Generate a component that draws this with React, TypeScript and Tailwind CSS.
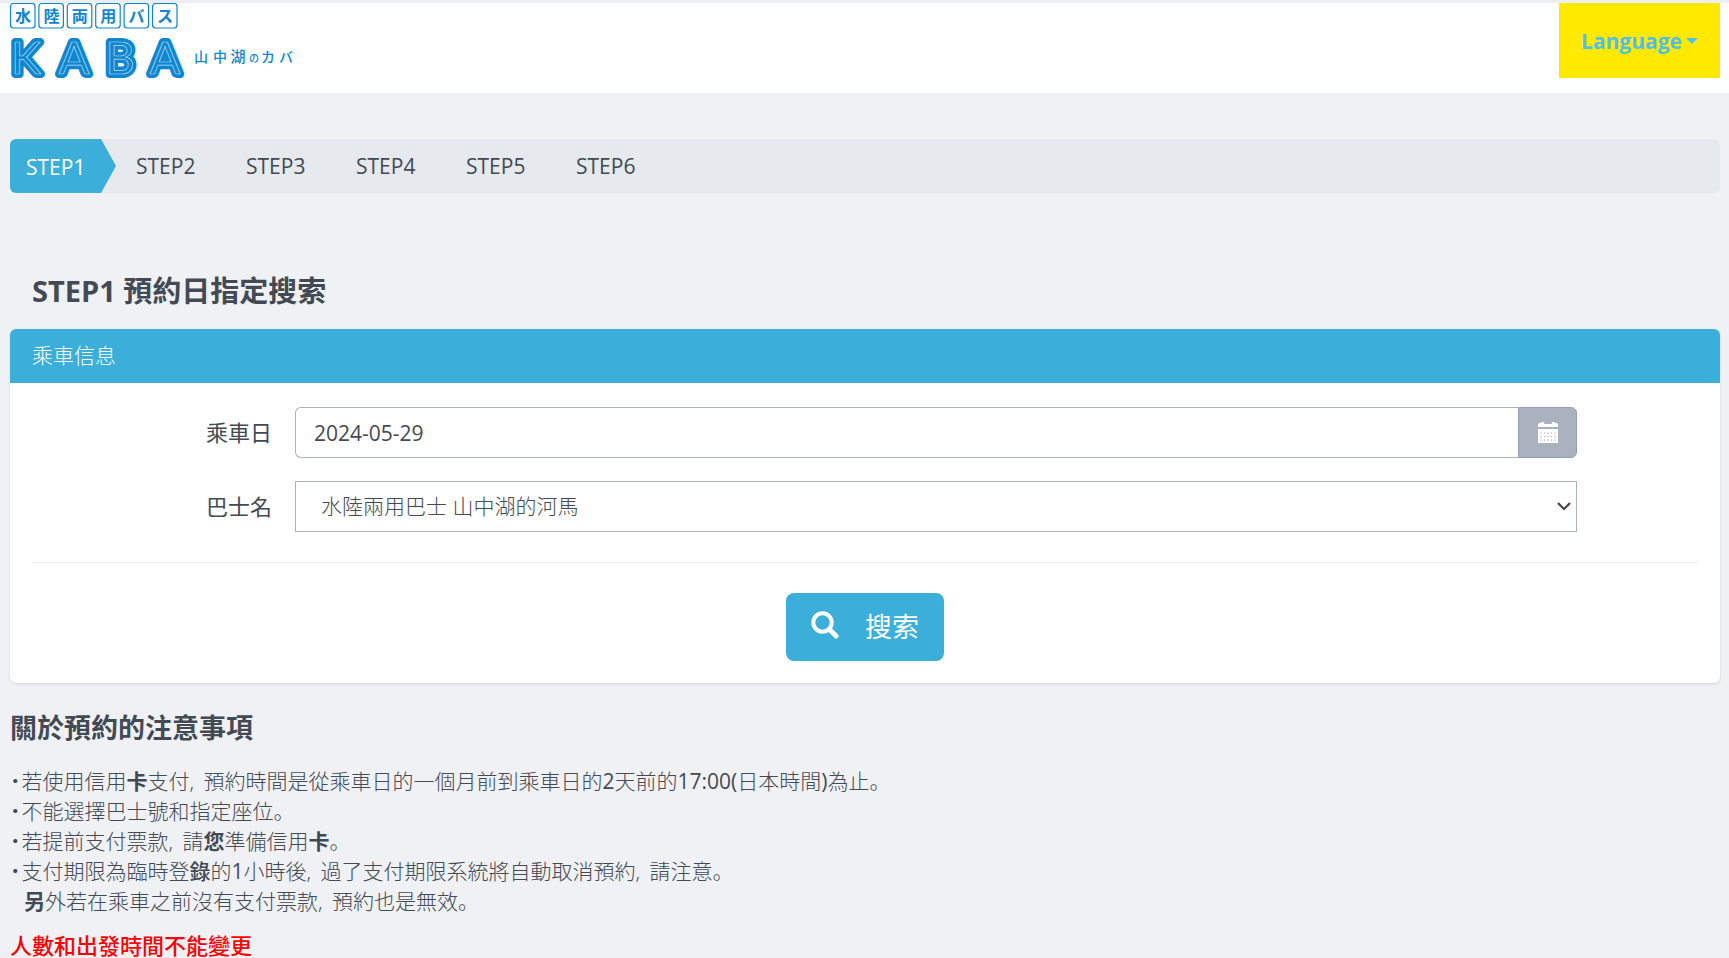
import React, { useState } from 'react';

const steps = ['STEP1', 'STEP2', 'STEP3', 'STEP4', 'STEP5', 'STEP6'];

const tiles = ['水', '陸', '両', '用', 'バ', 'ス'];

const subtitle = [
  { char: '山', x: 201, size: 14 },
  { char: '中', x: 220, size: 14 },
  { char: '湖', x: 238, size: 15 },
  { char: 'の', x: 254, size: 10 },
  { char: 'カ', x: 268, size: 14 },
  { char: 'バ', x: 286, size: 14 },
];

const letters = [
  { char: 'K', x: 26 },
  { char: 'A', x: 74 },
  { char: 'B', x: 120 },
  { char: 'A', x: 165 },
];

const Logo: React.FC = () => (
  <svg width="300" height="80" viewBox="0 0 300 80" className="-ml-2.5 font-['Noto_Sans_CJK_JP',sans-serif]" role="img" aria-label="水陸両用バス KABA 山中湖のカバ">
    {tiles.map((t, i) => (
      <g key={t}>
        <rect x={10.5 + i * 28.4} y="0.5" width="24.5" height="24.5" rx="3" fill="#fff" stroke="#0e86d0" strokeWidth="1.2" />
        <text x={23 + i * 28.4} y="18.5" fontSize="16" fontWeight="700" textAnchor="middle" fill="#0e86d0">{t}</text>
      </g>
    ))}
    <g fontFamily="Lato, sans-serif" fontWeight="400" fontSize="45" textAnchor="middle" fill="#0e86d0" strokeLinejoin="round">
      {letters.map(l => (
        <g key={l.x}>
          <text x={l.x} y="71" stroke="#0e86d0" strokeWidth="8">{l.char}</text>
          <text x={l.x} y="71" stroke="#b5dbf2" strokeWidth="0.7">{l.char}</text>
        </g>
      ))}
    </g>
    {subtitle.map(s => (
      <text key={s.x} x={s.x} y="59" fontSize={s.size} fontWeight="500" textAnchor="middle" fill="#0e86d0">{s.char}</text>
    ))}
  </svg>
);

const CalendarIcon: React.FC = () => (
  <svg width="20" height="21" viewBox="0 0 20 21" fill="#fff" aria-hidden="true">
    <path d="M0 5V3q0-2 2-2h1q0-1 1.500-1T6 1q0 1 1 1h6q1 0 1-1 0-1 1.500-1T17 1h1q2 0 2 2v2z" />
    <path d="M0 7h20v14H0z" />
    {[11, 14.5, 18].map(y => [3, 6.5, 10, 13.5, 17].map(x => (
      <rect key={`${x}-${y}`} x={x - 0.6} y={y - 0.5} width="1.2" height="1.2" fill="#aab2bd" />
    )))}
  </svg>
);

const SearchIcon: React.FC = () => (
  <svg width="28" height="32" viewBox="0 0 28 32" fill="none" stroke="#fff" strokeLinecap="round" aria-hidden="true">
    <circle cx="11.500" cy="11.500" r="9.200" strokeWidth="4" />
    <path d="M18.500 18.500L25 25" strokeWidth="5" />
  </svg>
);

const B: React.FC<{ children: React.ReactNode }> = ({ children }) => <b className="font-bold">{children}</b>;
const N: React.FC<{ children: React.ReactNode }> = ({ children }) => <span className="font-normal">{children}</span>;
const Comma: React.FC = () => <span className="mr-1">, </span>;
const Dot: React.FC = () => <span className="mr-px font-bold">･</span>;

const App: React.FC = () => {
  const [date, setDate] = useState('2024-05-29');

  return (
    <div className="min-h-screen bg-[#f0f1f5] font-['Open_Sans','Noto_Sans_CJK_TC',sans-serif] text-[21px] leading-[30px] text-[#434a54]">
      <header className="flex items-start justify-between border-t-3 border-[#eceef0] bg-white pr-[9px] pb-[10px] pl-2.5">
        <a href="#"><Logo /></a>
        <button type="button" className="flex h-[75px] items-center gap-1 bg-[#ffe900] px-[22px] font-bold text-[#4fc1e9]">
          Language
          <span className="border-x-6 border-t-6 border-x-transparent border-t-[#4fc1e9]" />
        </button>
      </header>

      <main className="pt-[46px] pr-[9px] pl-2.5">
        <nav>
          <ol className="flex h-[54px] items-center overflow-hidden rounded-md bg-[#e6e9ed]">
            {steps.map((s, i) => i === 0 ? (
              <li key={s} className="flex h-full w-[126px] items-center">
                <span className="flex h-full w-[91px] items-center bg-[#3bafda] pt-0.5 pl-4 text-white">{s}</span>
                <svg width="15" height="54" viewBox="0 0 15 54" aria-hidden="true"><path d="M0 0L15 27L0 54z" fill="#3bafda" /></svg>
              </li>
            ) : (
              <li key={s} className="w-[110px]">{s}</li>
            ))}
          </ol>
        </nav>

        <h1 className="mt-[78px] px-[22px] text-[29px] leading-10 font-bold">STEP1 預約日指定搜索</h1>

        <section className="mt-[18px] overflow-hidden rounded-md bg-white shadow-sm">
          <h2 className="bg-[#3bafda] px-[22px] pt-[11px] pb-[13px] font-light text-white">乘車信息</h2>
          <form className="pt-6 pb-[22px]" onSubmit={e => e.preventDefault()}>
            <div className="flex items-center">
              <label htmlFor="date" className="w-1/6 pr-[23px] pb-0.5 text-right text-[22px]">乘車日</label>
              <div className="flex h-[51px] w-3/4">
                <input id="date" className="min-w-0 flex-1 rounded-l-md border border-r-0 border-[#aab2bd] bg-white px-[18px]" value={date} onChange={e => setDate(e.target.value)} />
                <button type="button" aria-label="日曆" className="flex w-[59px] items-center justify-center rounded-r-md border border-[#96a0ad] bg-[#aab2bd]"><CalendarIcon /></button>
              </div>
            </div>
            <div className="mt-[23px] flex items-center">
              <label htmlFor="bus" className="w-1/6 pr-[23px] pb-0.5 text-right text-[22px]">巴士名</label>
              <div className="relative h-[51px] w-3/4">
                <select id="bus" className="h-full w-full appearance-none border border-[#aab2bd] bg-white px-[25px] pb-0.5 font-light">
                  <option>水陸兩用巴士 山中湖的河馬</option>
                </select>
                <svg width="14" height="9" viewBox="0 0 14 9" className="pointer-events-none absolute top-[21px] right-1.5" fill="none" stroke="#434a54" strokeWidth="2.200" aria-hidden="true"><path d="M1 1l6 6 6-6" /></svg>
              </div>
            </div>
            <hr className="mx-[22px] mt-[30px] border-[#eeeeee]" />
            <div className="mt-[30px] flex justify-center">
              <button type="submit" className="flex h-[68px] items-center gap-[26px] rounded-lg bg-[#3bafda] px-[25px] text-[27px] text-white"><SearchIcon />搜索</button>
            </div>
          </form>
        </section>

        <h2 className="mt-[25px] text-[27px] leading-10 font-bold">關於預約的注意事項</h2>

        <div lang="ja" className="mt-[18px] font-['Open_Sans','Noto_Sans_CJK_JP',sans-serif] font-light">
          <p><Dot />若使用信用<B>卡</B>支付<Comma />預約時間是從乘車日的一個月前到乘車日的<N>2</N>天前的<N>17:00(</N>日本時間<N>)</N>為止。</p>
          <p><Dot />不能選擇巴士號和指定座位。</p>
          <p><Dot />若提前支付票款<Comma />請<B>您</B>準備信用<B>卡</B>。</p>
          <p><Dot />支付期限為臨時登<b className="font-medium">錄</b>的<N>1</N>小時後<Comma />過了支付期限系統將自動取消預約<Comma />請注意。</p>
          <p className="pl-3.5"><B>另</B>外若在乘車之前沒有支付票款<Comma />預約也是無效。</p>
        </div>
        <p className="mt-[14px] text-[22px] font-medium text-[#ff0000]">人數和出發時間不能變更</p>
      </main>
    </div>
  );
};

export default App;
